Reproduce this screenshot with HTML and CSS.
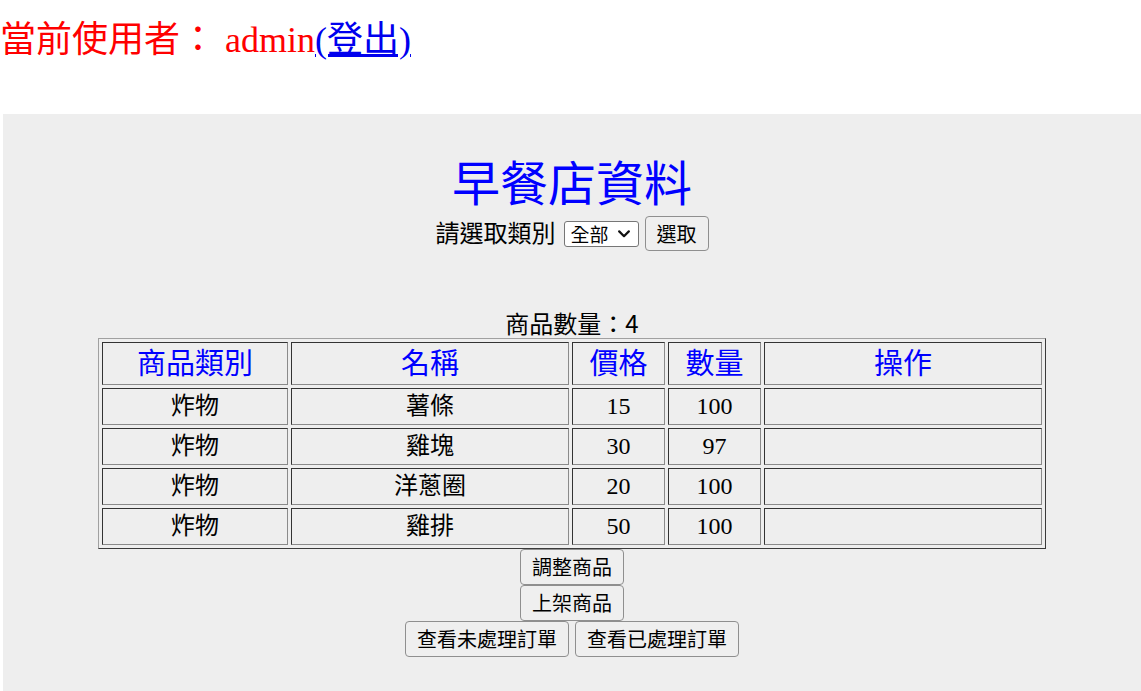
FILE: index.html
```html
<!DOCTYPE html>
<html lang="zh-Hant">
<head>
<meta charset="utf-8">
<title>早餐店資料</title>
<link rel="stylesheet" href="styles.css">
</head>
<body>
<div class="user-bar">當前使用者： admin<a href="#" class="logout">(登出)</a></div>
<main class="panel">
  <h1 class="title">早餐店資料</h1>
  <form class="filter">
    <label class="filter-label" for="cat">請選取類別</label>
    <span class="select-wrap">
      <select id="cat" class="filter-select"><option>全部</option><option>炸物</option></select>
      <svg class="select-caret" width="12" height="8" viewBox="0 0 12 8" aria-hidden="true"><path d="M1.2 1.4 L6 6.2 L10.8 1.4" fill="none" stroke="#111" stroke-width="2.2" stroke-linecap="round" stroke-linejoin="round"/></svg>
    </span>
    <button type="button" class="btn btn-small">選取</button>
  </form>
  <div class="count">商品數量：4</div>
  <table class="goods">
    <colgroup>
      <col class="c-cat">
      <col class="c-name">
      <col class="c-price">
      <col class="c-qty">
      <col class="c-op">
    </colgroup>
    <thead>
      <tr><th>商品類別</th><th>名稱</th><th>價格</th><th>數量</th><th>操作</th></tr>
    </thead>
    <tbody>
      <tr><td>炸物</td><td>薯條</td><td>15</td><td>100</td><td></td></tr>
      <tr><td>炸物</td><td>雞塊</td><td>30</td><td>97</td><td></td></tr>
      <tr><td>炸物</td><td>洋蔥圈</td><td>20</td><td>100</td><td></td></tr>
      <tr><td>炸物</td><td>雞排</td><td>50</td><td>100</td><td></td></tr>
    </tbody>
  </table>
  <div class="actions">
    <div class="action-row"><button type="button" class="btn">調整商品</button></div>
    <div class="action-row"><button type="button" class="btn">上架商品</button></div>
    <div class="action-row">
      <button type="button" class="btn">查看未處理訂單</button>
      <button type="button" class="btn">查看已處理訂單</button>
    </div>
  </div>
</main>
</body>
</html>
```
FILE: styles.css
```css
html, body {
  margin: 0;
  padding: 0;
  background: #fff;
}
body {
  font-family: "Liberation Serif", "Noto Sans CJK TC", serif;
  color: #000;
}
.user-bar {
  font-size: 36px;
  line-height: 44px;
  color: #f00;
  padding-top: 18px;
  margin-bottom: 52px;
  white-space: nowrap;
}
.logout {
  color: #0000ee;
  text-decoration: underline;
}
.panel {
  margin-left: 3px;
  background: #eeeeee;
  padding: 43px 0 34px;
  display: flex;
  flex-direction: column;
  align-items: center;
}
.title {
  margin: 0;
  font-size: 48px;
  font-weight: normal;
  line-height: 56px;
  color: #00f;
}
.filter {
  margin: 0;
  display: flex;
  align-items: center;
  height: 41px;
  font-size: 24px;
}
.filter-label {
  line-height: 30px;
  margin-right: 8px;
}
.select-wrap {
  position: relative;
  display: inline-flex;
  margin-right: 6px;
}
.filter-select {
  appearance: none;
  -webkit-appearance: none;
  box-sizing: border-box;
  width: 75px;
  height: 26px;
  font-family: "Noto Sans CJK TC", sans-serif;
  font-size: 19px;
  line-height: 24px;
  border: 1px solid #767676;
  border-radius: 3px;
  background: #fff;
  color: #000;
  padding: 0 0 0 6px;
  margin: 0;
}
.select-caret {
  position: absolute;
  right: 9px;
  top: 9px;
  pointer-events: none;
}
.btn {
  font-family: "Noto Sans CJK TC", sans-serif;
  font-size: 20px;
  line-height: 1;
  height: 36px;
  padding: 0 11px;
  margin: 0;
  border: 1px solid #8f8f8f;
  border-radius: 4px;
  background: #efefef;
  color: #000;
}
.btn-small {
  height: 35px;
}
.count {
  margin-top: 54px;
  height: 30px;
  line-height: 30px;
  font-family: "Noto Sans CJK TC", sans-serif;
  font-size: 24px;
}
.goods {
  width: 948px;
  table-layout: fixed;
  border-collapse: separate;
  border-spacing: 3px;
  border: 1px solid;
  border-color: #a0a0a0 #3a3a3a #3a3a3a #a0a0a0;
}
.c-cat { width: 186px; }
.c-name { width: 278px; }
.c-price { width: 93px; }
.c-qty { width: 93px; }
.c-op { width: 278px; }
.goods th,
.goods td {
  border: 1px solid;
  border-color: #333 #8a8a8a #8a8a8a #333;
  padding: 0;
  text-align: center;
}
.goods th {
  font-size: 29px;
  font-weight: normal;
  line-height: 39px;
  padding-top: 2px;
  color: #00f;
}
.goods td {
  font-size: 24px;
  line-height: 35px;
}
.actions {
  display: flex;
  flex-direction: column;
  align-items: center;
}
.action-row {
  display: flex;
  gap: 6px;
}
```
